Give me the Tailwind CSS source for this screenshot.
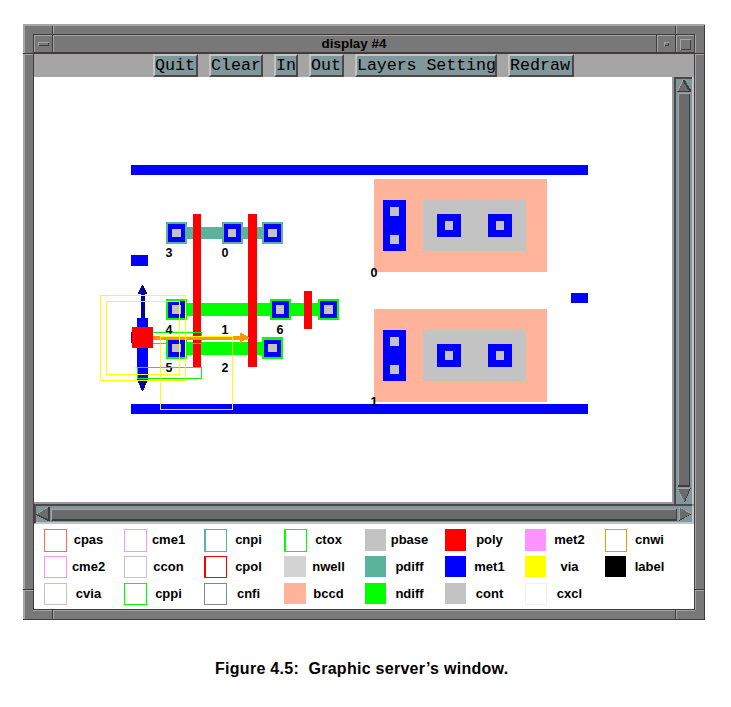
<!DOCTYPE html>
<html lang="en">
<head>
<meta charset="utf-8">
<title>display #4</title>
<script src="https://cdn.jsdelivr.net/npm/@tailwindcss/browser@4"></script>
</head>
<body class="w-[731px] h-[707px] overflow-hidden bg-white text-black font-['Liberation_Sans',Arial,sans-serif] pt-6">
<main class="relative ml-[23px] w-[682px] h-[596px] bg-[#787878] pl-[11px] pt-[12px]">
  <!-- window frame bevels -->
  <svg class="absolute inset-0" width="682" height="596" shape-rendering="crispEdges" aria-hidden="true">
    <path fill="#a5a5a5" d="M0 0H682V2H0ZM0 0H2V596H0ZM30 0H31V30H30ZM653 0H654V30H653ZM0 30H10V31H0ZM672 30H682V31H672ZM0 566H10V567H0ZM672 566H682V567H672ZM30 586H31V596H30ZM653 586H654V596H653ZM10 586H672V587H10ZM672 11H673V586H672ZM11 11H671V12H11ZM11 11H12V28H11ZM634 11H635V28H634Z"/>
    <path fill="#3f3b3f" d="M10 10H672V11H10ZM10 10H11V586H10ZM671 10H672V586H671ZM10 585H672V586H10ZM0 595H682V596H0ZM681 1H682V596H681ZM29 2H30V30H29ZM652 2H653V30H652ZM633 11H634V30H633ZM0 29H11V30H0ZM671 29H682V30H671ZM11 28H671V30H11ZM0 565H10V566H0ZM671 565H682V566H671ZM29 586H30V596H29ZM652 586H653V596H652Z"/>
  </svg>
  <div class="relative w-[660px]">
    <header class="flex items-center h-[18px] text-[13.4px] font-bold">
      <svg width="19" height="18" shape-rendering="crispEdges"><path fill="#a5a5a5" d="M4 6H15V7H5V10H4Z"/><path fill="#3f3b3f" d="M14 7H15V10H5V9H14Z"/></svg>
      <h1 class="flex-1 text-center leading-[15px] pb-[4px] pr-px">display #4</h1>
      <svg width="38" height="18" shape-rendering="crispEdges"><path fill="#a5a5a5" d="M8 6H13V7H9V10H8ZM24 3H35V4H25V14H24Z"/><path fill="#3f3b3f" d="M12 7H13V10H9V9H12ZM34 4H35V14H25V13H34Z"/></svg>
    </header>
    <nav class="flex h-[23px] bg-[#a5a5a5] pl-[119px] text-[16.67px] leading-[18px] font-['Liberation_Mono','Courier_New',monospace]">
      <button class="w-[45px] mr-[11px] h-[23px] bg-[#81979b] border-2 border-t-[#c3c3c3] border-l-[#c3c3c3] border-r-[#4b474b] border-b-[#4b474b] flex items-center justify-start">Quit</button>
      <button class="w-[54px] mr-[11px] h-[23px] bg-[#81979b] border-2 border-t-[#c3c3c3] border-l-[#c3c3c3] border-r-[#4b474b] border-b-[#4b474b] flex items-center justify-start">Clear</button>
      <button class="w-[24px] mr-[11px] h-[23px] bg-[#81979b] border-2 border-t-[#c3c3c3] border-l-[#c3c3c3] border-r-[#4b474b] border-b-[#4b474b] flex items-center justify-start">In</button>
      <button class="w-[35px] mr-[11px] h-[23px] bg-[#81979b] border-2 border-t-[#c3c3c3] border-l-[#c3c3c3] border-r-[#4b474b] border-b-[#4b474b] flex items-center justify-start">Out</button>
      <button class="w-[142px] mr-[11px] h-[23px] bg-[#81979b] border-2 border-t-[#c3c3c3] border-l-[#c3c3c3] border-r-[#4b474b] border-b-[#4b474b] flex items-center justify-start whitespace-pre tracking-[-0.08px]">Layers Setting</button>
      <button class="w-[66px] h-[23px] bg-[#81979b] border-2 border-t-[#c3c3c3] border-l-[#c3c3c3] border-r-[#4b474b] border-b-[#4b474b] flex items-center justify-start">Redraw</button>
    </nav>
    <div class="flex h-[427px]">
      <svg class="bg-white border-b-2 border-r-2 border-[#999999]" width="640" height="427" viewBox="34 77 638 425" shape-rendering="crispEdges">
        <!-- metal rails -->
        <path fill="#0000ff" d="M131 165H588V175H131ZM131 255H148V266H131ZM571 293H588V303H571Z"/>
        <!-- diffusion bars -->
        <path fill="#5bb39b" d="M187 227H264V239H187Z"/>
        <path fill="#00ff00" d="M187 303H320V316H187ZM187 342H264V355H187Z"/>
        <!-- bccd blocks -->
        <g id="cell">
          <path fill="#ffb39b" d="M374 179H547V272H374Z"/>
          <path fill="#c3c3c3" d="M423 200H526V251H423Z"/>
          <path fill="#0000ff" d="M383 200H406V251H383ZM437 214H461V237H437ZM488 214H512V237H488Z"/>
          <path fill="#c3c3c3" d="M390 207H399V216H390ZM390 235H399V244H390ZM445 221H453V230H445ZM496 221H504V230H496Z"/>
        </g>
        <use href="#cell" y="130"/>
        <path fill="#0000ff" d="M131 404H588V414H131Z"/>
        <!-- poly -->
        <path fill="#ff0000" d="M193 214H201V367H193ZM248 214H257V367H248ZM304 291H312V329H304Z"/>
        <path fill="none" stroke="#00ff00" d="M137.500 332.500H201.500V343.500H137.500Z"/>
        <!-- contacts -->
        <path fill="#5bb39b" d="M166 222H187V244H166ZM222 222H243V244H222ZM262 222H283V244H262Z"/>
        <path fill="#00ff00" d="M166 299H187V320H166ZM270 299H291V320H270ZM318 299H339V320H318ZM166 337H187V359H166ZM262 337H283V359H262Z"/>
        <path fill="#0000ff" d="M168 224H185V242H168ZM224 224H241V242H224ZM264 224H281V242H264ZM168 301H185V318H168ZM272 301H289V318H272ZM320 301H337V318H320ZM168 340H185V357H168ZM264 340H281V357H264Z"/>
        <path fill="#c3c3c3" d="M172 229H181V237H172ZM228 229H236V237H228ZM268 229H277V237H268ZM172 305H181V314H172ZM276 305H284V314H276ZM324 305H333V314H324ZM172 344H181V352H172ZM268 344H277V352H268Z"/>
        <g font-family="Liberation Sans, Arial, sans-serif" font-weight="700" font-size="12.5">
          <text x="165.500" y="257">3</text><text x="221.500" y="257">0</text>
          <text x="165.500" y="334">4</text><text x="221.500" y="334">1</text><text x="276.500" y="334">6</text>
          <text x="165.500" y="372">5</text><text x="221.500" y="372">2</text>
          <text x="370.500" y="277">0</text><text x="370.500" y="406">1</text>
        </g>
        <!-- connector box and axes -->
        <path fill="#0000ff" d="M137 318H148V381H137ZM131 332H134V343H131Z"/>
        <path fill="#00009b" d="M141 293H145V318H141ZM142 285H143V286H144V288H145V290H146V292H147V294H138V292H139V290H140V288H141V286H142ZM138 381H147V383H146V385H145V388H144V390H143V391H142V390H141V388H140V385H139V383H138Z"/>
        <path fill="#ff9500" d="M153 336H241V340H153ZM240 333H242V334H244V335H246V336H248V337H249V339H247V340H244V341H242V343H240Z"/>
        <path fill="none" stroke="#00ff00" d="M137.500 367.500H201.500V378.500H137.500Z"/>
        <path fill="none" stroke="#ffff00" d="M100.500 295.500H185.500V380.500H100.500ZM106.500 301.500H179.500V374.500H106.500ZM160.500 336.500H232.500V409.500H160.500Z"/>
        <path fill="#ff0000" d="M132 327H153V348H132Z"/>
      </svg>
      <svg width="20" height="427" shape-rendering="crispEdges">
        <path fill="#81979b" d="M0 0H20V427H0Z"/>
        <path fill="#4b474b" d="M0 0H18V2H0ZM0 0H2V427H0Z"/>
        <path fill="#c3c3c3" d="M18 0H20V427H18Z"/>
        <path fill="#6b6b6b" d="M10 2L17 15H3ZM4 16H16V410H4ZM3 411H17L10 425Z"/>
        <path fill="#a5a5a5" d="M4 16H16V17H5V409H4ZM9 2H10L4 14H3ZM3 411H17V412H4L10 424H9Z"/>
        <path fill="#3f3b3f" d="M10 2L17 13V15H3V14H15L9 4ZM15 17H16V410H4V408H15ZM17 411L11 425H10L16 411Z"/>
      </svg>
    </div>
    <svg class="block" width="660" height="20" shape-rendering="crispEdges">
      <path fill="#81979b" d="M0 0H660V20H0Z"/>
      <path fill="#4b474b" d="M0 0H658V2H0ZM0 0H2V19H0Z"/>
      <path fill="#c3c3c3" d="M2 18H660V20H1ZM658 2H660V20H658Z"/>
      <path fill="#6b6b6b" d="M2 10L15 3V17ZM17 5H643V17H17ZM645 3L658 10L645 17Z"/>
      <path fill="#a5a5a5" d="M2 10L14 3V4L3 10ZM17 5H642V6H18V16H17ZM645 3L657 9V10L646 4V17H645Z"/>
      <path fill="#3f3b3f" d="M14 3H16V17H14L2 11V10L14 15ZM642 5H643V17H18V15H642ZM645 17V16L657 10H658Z"/>
    </svg>
    <div class="h-[85px] bg-white pt-[5px] pl-[10px] grid grid-cols-[80px_80px_80px_81px_80px_80px_80px_80px] grid-rows-[27px_27px_26px] text-[13px] leading-[22px] font-bold text-center">
      <div class="flex"><i class="size-[23px] border border-[#ff6763]"></i><span class="w-[43px]">cpas</span></div>
      <div class="flex"><i class="size-[23px] border border-[#ff93ff]"></i><span class="w-[43px]">cme1</span></div>
      <div class="flex"><i class="size-[23px] border border-l-2 border-[#5bb39b]"></i><span class="w-[43px]">cnpi</span></div>
      <div class="flex"><i class="size-[23px] border border-l-2 border-[#00ff00]"></i><span class="w-[43px]">ctox</span></div>
      <div class="flex"><i class="w-[21px] h-[22px] mr-[2px] bg-[#c3c3c3]"></i><span class="w-[43px]">pbase</span></div>
      <div class="flex"><i class="w-[21px] h-[22px] mr-[2px] bg-[#ff0000]"></i><span class="w-[43px]">poly</span></div>
      <div class="flex"><i class="w-[21px] h-[22px] mr-[2px] bg-[#ff93ff]"></i><span class="w-[43px]">met2</span></div>
      <div class="flex"><i class="w-[22px] h-[23px] mr-px border border-[#ff9500]"></i><span class="w-[43px]">cnwi</span></div>

      <div class="flex"><i class="w-[23px] h-[22px] border border-[#ff93ff]"></i><span class="w-[43px]">cme2</span></div>
      <div class="flex"><i class="w-[23px] h-[22px] border border-[#c3c3c3]"></i><span class="w-[43px]">ccon</span></div>
      <div class="flex"><i class="w-[23px] h-[22px] border border-l-2 border-[#ff0000]"></i><span class="w-[43px]">cpol</span></div>
      <div class="flex"><i class="w-[22px] h-[21px] mr-px bg-[#d3d3d3]"></i><span class="w-[43px]">nwell</span></div>
      <div class="flex"><i class="size-[21px] mr-[2px] bg-[#5bb39b]"></i><span class="w-[43px]">pdiff</span></div>
      <div class="flex"><i class="size-[21px] mr-[2px] bg-[#0000ff]"></i><span class="w-[43px]">met1</span></div>
      <div class="flex"><i class="size-[21px] mr-[2px] bg-[#ffff00]"></i><span class="w-[43px]">via</span></div>
      <div class="flex"><i class="size-[21px] mr-[2px] bg-black"></i><span class="w-[43px]">label</span></div>

      <div class="flex"><i class="w-[23px] h-[22px] border border-[#c3c3c3]"></i><span class="w-[43px]">cvia</span></div>
      <div class="flex"><i class="w-[23px] h-[22px] border border-[#00ff00]"></i><span class="w-[43px]">cppi</span></div>
      <div class="flex"><i class="w-[23px] h-[22px] border border-[#878787]"></i><span class="w-[43px]">cnfi</span></div>
      <div class="flex"><i class="w-[22px] h-[21px] mr-px bg-[#ffb39b]"></i><span class="w-[43px]">bccd</span></div>
      <div class="flex"><i class="size-[21px] mr-[2px] bg-[#00ff00]"></i><span class="w-[43px]">ndiff</span></div>
      <div class="flex"><i class="size-[21px] mr-[2px] bg-[#c3c3c3]"></i><span class="w-[43px]">cont</span></div>
      <div class="flex"><i class="size-[22px] mr-px border border-[#efefef]"></i><span class="w-[43px]">cxcl</span></div>
    </div>
  </div>
</main>
<p class="mt-[39px] ml-[215px] text-[16px] leading-[20px] font-bold tracking-[0.28px] whitespace-pre">Figure 4.5:  Graphic server’s window.</p>
</body>
</html>
